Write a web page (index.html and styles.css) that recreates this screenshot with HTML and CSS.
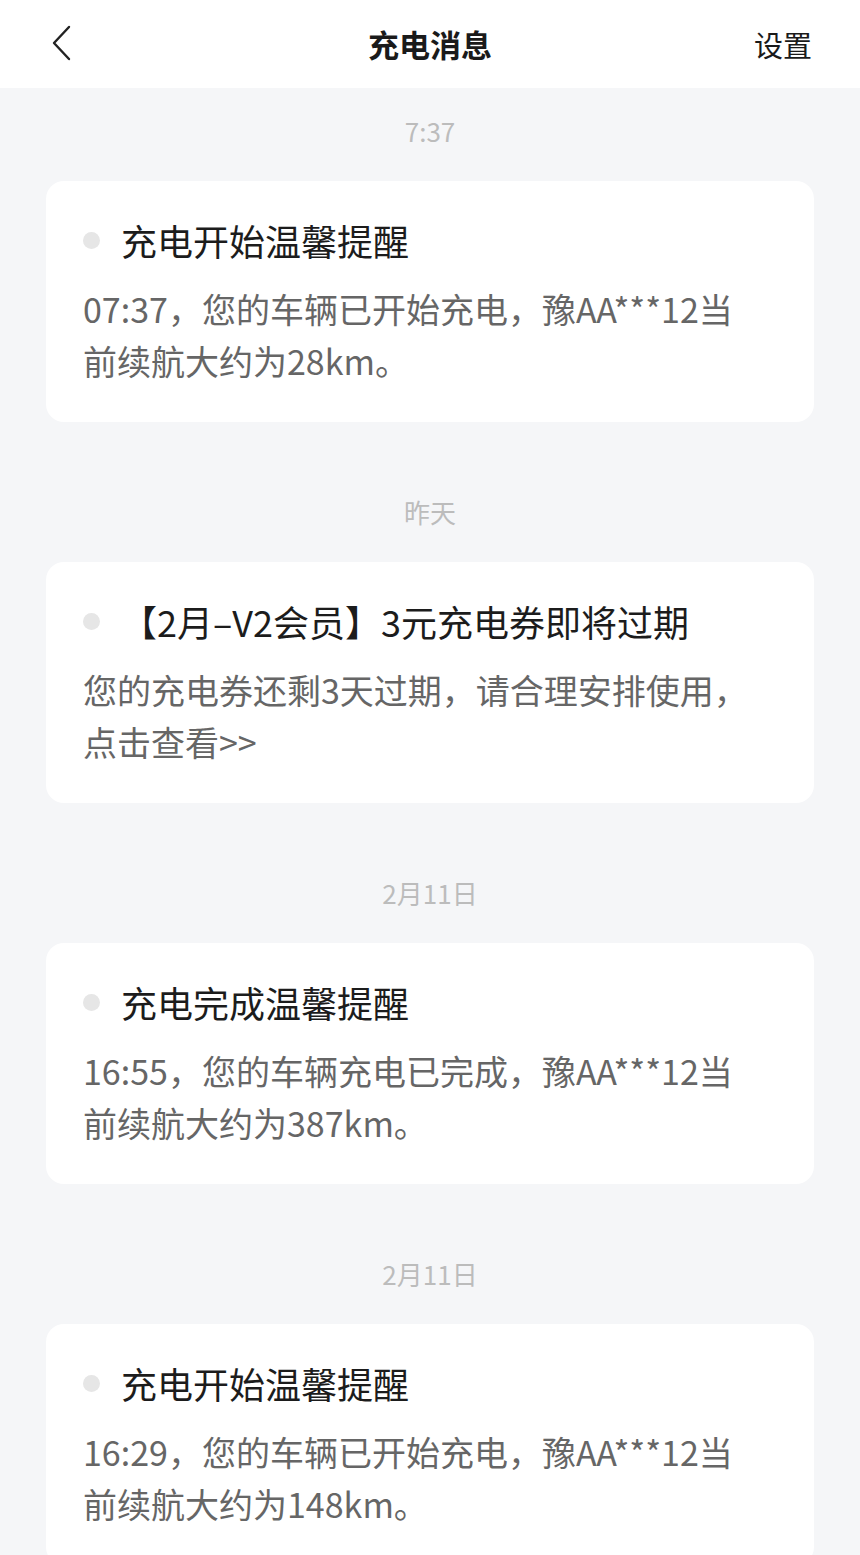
FILE: index.html
```html
<!DOCTYPE html>
<html lang="zh-CN">
<head>
<meta charset="utf-8">
<title>充电消息</title>
<link rel="stylesheet" href="styles.css">
</head>
<body>
<header class="topbar">
  <button class="back" aria-label="返回">
    <svg width="24" height="36" viewBox="0 0 24 36"><path d="M19 2 L4 18 L19 34" fill="none" stroke="#222" stroke-width="2.4" stroke-linecap="round" stroke-linejoin="round"/></svg>
  </button>
  <h1 class="title">充电消息</h1>
  <a class="settings">设置</a>
</header>
<main class="list">
  <section class="group">
    <div class="stamp">7:37</div>
    <article class="card">
      <div class="card-head"><span class="dot"></span><h2 class="card-title">充电开始温馨提醒</h2></div>
      <p class="card-body">07:37，您的车辆已开始充电，豫AA***12当前续航大约为28km。</p>
    </article>
  </section>
  <section class="group">
    <div class="stamp">昨天</div>
    <article class="card">
      <div class="card-head"><span class="dot"></span><h2 class="card-title">【2月–V2会员】3元充电券即将过期</h2></div>
      <p class="card-body">您的充电券还剩3天过期，请合理安排使用，点击查看&gt;&gt;</p>
    </article>
  </section>
  <section class="group">
    <div class="stamp">2月11日</div>
    <article class="card">
      <div class="card-head"><span class="dot"></span><h2 class="card-title">充电完成温馨提醒</h2></div>
      <p class="card-body">16:55，您的车辆充电已完成，豫AA***12当前续航大约为387km。</p>
    </article>
  </section>
  <section class="group">
    <div class="stamp">2月11日</div>
    <article class="card">
      <div class="card-head"><span class="dot"></span><h2 class="card-title">充电开始温馨提醒</h2></div>
      <p class="card-body">16:29，您的车辆已开始充电，豫AA***12当前续航大约为148km。</p>
    </article>
  </section>
</main>
</body>
</html>
```
FILE: styles.css
```css
* { box-sizing: border-box; }
html, body {
  margin: 0;
  padding: 0;
  background: #f5f6f8;
  font-family: "Noto Sans CJK SC", "Noto Sans", sans-serif;
}
.topbar {
  height: 88px;
  background: #fff;
  display: flex;
  align-items: center;
  justify-content: space-between;
  padding: 0 48px 0 50px;
  position: relative;
}
.back {
  border: 0;
  background: none;
  padding: 0;
  width: 24px;
  height: 36px;
  display: flex;
  margin-top: -2px;
}
.title {
  margin: 0;
  font-size: 31px;
  font-weight: 700;
  color: #1a1a1a;
  position: absolute;
  left: 0;
  right: 0;
  text-align: center;
  line-height: 88px;
  pointer-events: none;
}
.settings {
  font-size: 29px;
  color: #1a1a1a;
}
.list {
  display: flex;
  flex-direction: column;
}
.group {
  padding: 0 46px 47px;
}
.stamp {
  padding: 28px 0 35px;
  line-height: 30px;
  text-align: center;
  font-size: 26px;
  color: #bcbcbc;
}
.card {
  background: #fff;
  border-radius: 18px;
  padding: 35px 56px 35px 37px;
}
.card-head {
  display: flex;
  align-items: center;
  height: 48px;
}
.dot {
  width: 17px;
  height: 17px;
  border-radius: 50%;
  background: #e6e6e6;
  margin-right: 21px;
  flex: none;
}
.card-title {
  margin: 0;
  font-size: 36px;
  font-weight: 400;
  color: #1c1c1c;
  white-space: nowrap;
}
.card-body {
  margin: 19px 0 0;
  font-size: 34px;
  line-height: 52px;
  color: #666;
}
```
